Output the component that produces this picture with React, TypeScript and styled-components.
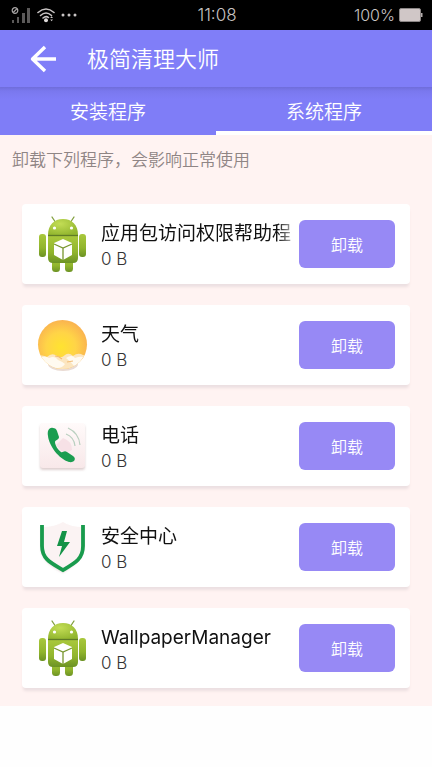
import React, { useState } from "react";
import styled, { createGlobalStyle } from "styled-components";

const GlobalStyle = createGlobalStyle`
  * { box-sizing: border-box; }
  body {
    margin: 0;
    background: #fefefe;
    font-family: Inter, "Noto Sans CJK SC", sans-serif;
    font-weight: 350;
  }
  button { font: inherit; border: 0; padding: 0; cursor: pointer; }
`;

const StatusBar = styled.div`
  display: grid;
  grid-template-columns: 1fr auto 1fr;
  align-items: center;
  height: 30px;
  padding: 0 9px 0 11px;
  background: #000;
  color: #c8c4c4;
  font-size: 16px;
  font-weight: 300;
  line-height: 20px;
`;

const Clock = styled.span`
  font-size: 17px;
`;

const StatusGroup = styled.div<{ $end?: boolean }>`
  display: flex;
  align-items: center;
  justify-content: ${(p) => (p.$end ? "flex-end" : "flex-start")};
  gap: ${(p) => (p.$end ? "4px" : "6px")};
`;

const Header = styled.header`
  display: flex;
  align-items: center;
  gap: 30px;
  height: 57px;
  padding-left: 29px;
  background: #807ef8;
  color: #fff;
`;

const BackButton = styled.button`
  display: flex;
  width: 28px;
  height: 28px;
  background: none;
  color: #fff;
`;

const Title = styled.h1`
  margin: 0;
  font-size: 22px;
  line-height: 28px;
  font-weight: 350;
`;

const Tabs = styled.div`
  display: flex;
  height: 48px;
  background: linear-gradient(#6f6dda, #7a78ee 4px, #7f7df7 12px);
`;

const Tab = styled.button<{ $active: boolean }>`
  flex: 1;
  padding-top: 8px;
  background: none;
  border-bottom: 4px solid ${(p) => (p.$active ? "#fff" : "transparent")};
  color: #fff;
  font-size: 19px;
  line-height: 24px;
`;

const Content = styled.main`
  padding: 12px 0 18px;
  background: #fff3f2;
`;

const Notice = styled.p`
  margin: 0 12px;
  color: #8f8585;
  font-size: 17px;
  line-height: 26px;
`;

const AppList = styled.ul`
  display: flex;
  flex-direction: column;
  gap: 21px;
  margin: 31px 22px 0;
  padding: 0;
  list-style: none;
`;

const Card = styled.li`
  display: flex;
  align-items: center;
  height: 80px;
  padding: 0 15px 0 13px;
  border-radius: 4px;
  background: #fff;
  box-shadow: 0 4px 3px -1px #ecdfe1;
`;

const Info = styled.div`
  flex: 1;
  min-width: 0;
  margin: 0 8px 0 12px;
  padding-top: 4px;
`;

const Name = styled.div`
  overflow: hidden;
  white-space: nowrap;
  color: #111;
  font-size: 19px;
  font-weight: 400;
  line-height: 26px;
  mask-image: linear-gradient(to left, rgba(0, 0, 0, 0.4), #000 14px);
`;

const Size = styled.div`
  color: #333;
  font-size: 17px;
  line-height: 24px;
`;

const Uninstall = styled.button`
  width: 96px;
  height: 48px;
  border-radius: 6px;
  background: #9789f5;
  color: #fff;
  font-size: 16px;
`;

const Picture = styled.svg`
  flex: none;
  display: block;
`;

const SignalIcon = () => (
  <Picture width="20" height="16" viewBox="0 0 20 16" aria-hidden="true">
    <g fill="#5b5959">
      <rect x="1" y="13" width="2" height="3" />
      <rect x="6" y="10" width="2" height="6" />
      <rect x="11" y="6" width="3" height="10" />
      <rect x="16" y="1" width="3" height="15" />
    </g>
    <g fill="none" stroke="#aaa7a7" strokeWidth="1.2">
      <circle cx="4" cy="3.5" r="2.8" />
      <path d="M2.2 5.5 6 1.6" />
    </g>
  </Picture>
);

const WifiIcon = () => (
  <Picture width="18" height="16" viewBox="0 0 18 16" aria-hidden="true">
    <g fill="none" stroke="#c8c4c4" strokeWidth="1.6" strokeLinecap="round">
      <path d="M1 5.5Q9-1.5 17 5.5" />
      <path d="M3.5 8.5Q9 3.5 14.5 8.5" />
      <path d="M6 11Q9 8.5 11.5 10.5" />
    </g>
    <circle cx="9" cy="13.3" r="2" fill="#dedada" />
    <path d="m13.2 11 1.4-1.8L16 11zM13.2 12.5H16l-1.4 1.8z" fill="#c8c4c4" />
  </Picture>
);

const MoreIcon = () => (
  <Picture width="16" height="4" viewBox="0 0 16 4" fill="#c8c4c4" aria-hidden="true">
    <circle cx="2" cy="2" r="1.5" />
    <circle cx="8" cy="2" r="1.5" />
    <circle cx="14" cy="2" r="1.5" />
  </Picture>
);

const BatteryIcon = () => (
  <Picture width="24" height="14" viewBox="0 0 24 14" aria-hidden="true">
    <rect x=".5" y=".5" width="21" height="13" rx="1.5" fill="#d0c7c7" stroke="#8b8686" />
    <rect x="22" y="5" width="1.5" height="4" fill="#b4adad" />
  </Picture>
);

const BackIcon = () => (
  <Picture width="28" height="28" viewBox="0 0 28 28" fill="none" stroke="#fff" strokeWidth="3.4" strokeLinejoin="round" aria-hidden="true">
    <path d="M27 14H4M16 2 3.5 14 16 26" />
  </Picture>
);

const RobotIcon = ({ id }: { id: string }) => (
  <Picture width="54" height="60" viewBox="0 0 54 60" aria-hidden="true">
    <defs>
      <linearGradient id={id + "-body"} x2="0" y2="1">
        <stop stopColor="#a9c83c" />
        <stop offset=".6" stopColor="#91b52d" />
        <stop offset="1" stopColor="#6c9224" />
      </linearGradient>
      <radialGradient id={id + "-head"} cx=".4" cy=".3" r=".75">
        <stop stopColor="#c3dd55" />
        <stop offset="1" stopColor="#91b52e" />
      </radialGradient>
    </defs>
    <path d="m17 3 4 6M39 3l-4 6" stroke="#819f3d" strokeWidth="1.3" strokeLinecap="round" />
    <g fill={`url(#${id}-body)`}>
      <rect x="17" y="42" width="8" height="16" rx="3.5" />
      <rect x="30" y="42" width="8" height="16" rx="3.5" />
      <rect x="4" y="20" width="7" height="23" rx="3" />
      <rect x="44" y="20" width="7" height="23" rx="3" />
      <path d="M13 22h30v22q0 5-5 5H18q-5 0-5-5z" />
    </g>
    <path d="M13 21C13 11 19 5 28 5s15 6 15 16z" fill={`url(#${id}-head)`} />
    <path d="M13 21.5h30" stroke="#5f7c26" strokeWidth="1.3" />
    <circle cx="19.5" cy="14" r="1.6" fill="#fff" />
    <circle cx="36.5" cy="14" r="1.6" fill="#fff" />
    <path d="m28 25 9 4v12l-9 5-9-5V29z" fill="#fff" />
    <path d="m19 30 9 4 9-4M28 34v12" fill="none" stroke="#78962f" strokeWidth="1.3" />
  </Picture>
);

const SunIcon = () => (
  <Picture width="54" height="60" viewBox="0 0 54 60" aria-hidden="true">
    <defs>
      <radialGradient id="sun" cx=".47" cy=".55" r=".6">
        <stop stopColor="#ffe330" />
        <stop offset=".5" stopColor="#ffd447" />
        <stop offset="1" stopColor="#f9ad51" />
      </radialGradient>
      <clipPath id="sun-disc"><circle cx="27.5" cy="29.5" r="24.5" /></clipPath>
      <filter id="sun-soft" x="-20%" y="-20%" width="140%" height="140%"><feGaussianBlur stdDeviation=".7" /></filter>
    </defs>
    <ellipse cx="28" cy="49" rx="15" ry="7" fill="#eadbd3" filter="url(#sun-soft)" />
    <circle cx="27.5" cy="29.5" r="24.5" fill="url(#sun)" />
    <g clipPath="url(#sun-disc)">
      <g filter="url(#sun-soft)">
        <path d="M0 41q6-2 12 1 5-5 10-1 4 3 8-1 4-3 8 1 5-4 10-1l6 2v16H0z" fill="#fce6c0" />
        <path d="M5 43q5-3 9 0 6-3 9 2 5 2 7 4-4 6-13 3-7-2-12-9M31 43q6-4 9 0 5-2 8-1-4 9-9 9-4-5-8-8z" fill="#fffaf0" />
        <path d="M20 41q4 0 7 3M32 47l6-1" fill="none" stroke="#f3bd78" strokeWidth="1.2" />
      </g>
    </g>
  </Picture>
);

const PhoneIcon = () => (
  <Picture width="54" height="60" viewBox="0 0 54 60" aria-hidden="true">
    <defs>
      <linearGradient id="phone-tile" x2="0" y2="1">
        <stop stopColor="#fffafa" />
        <stop offset="1" stopColor="#f8e8e9" />
      </linearGradient>
      <filter id="phone-soft" x="-20%" y="-20%" width="140%" height="140%"><feGaussianBlur stdDeviation="1" /></filter>
    </defs>
    <rect x="5" y="9" width="45" height="45" rx="3" fill="#dfd0d0" filter="url(#phone-soft)" />
    <rect x="5" y="7" width="45" height="45" rx="3" fill="url(#phone-tile)" />
    <path d="M28 22q9 3 9 12l-8 4-8-9z" fill="#f7e1e6" />
    <path d="M31 18q8 3 9 12M33 12q11 5 12 17" fill="none" stroke="#b9cfbf" strokeWidth="1.2" />
    <path
      d="M18 12c-4-1-6 3-5 8 1 10 11 23 21 26 5 1 8-3 4-6l-6-4c-3-2-4 1-6 0-3-2-6-7-6-10 0-2 4-2 4-5l-2-6q-1-3-4-3z"
      fill="#1b9d50"
    />
  </Picture>
);

const ShieldIcon = () => (
  <Picture width="54" height="60" viewBox="0 0 54 60" aria-hidden="true">
    <defs>
      <filter id="shield-soft" x="-20%" y="-20%" width="140%" height="140%"><feGaussianBlur stdDeviation="1" /></filter>
    </defs>
    <path d="M6 12q15 0 22-5 7 5 21 5v20q-2 12-21 24Q7 46 6 33z" fill="#ecdfe0" filter="url(#shield-soft)" />
    <path d="M7 10q13 0 21-5 7 5 20 5v22Q46 43 28 53 9 43 7 32z" fill="#fbf3f3" />
    <path d="M7 8v21c0 13 9 17 21 24 12-7 20-11 20-24V8" fill="none" stroke="#199b4d" strokeWidth="3.8" />
    <path d="m27 14-5 15h5l-3 11 11-15h-6l3-11z" fill="#149347" />
  </Picture>
);

const apps = [
  { name: "应用包访问权限帮助程", icon: <RobotIcon id="helper" /> },
  { name: "天气", icon: <SunIcon /> },
  { name: "电话", icon: <PhoneIcon /> },
  { name: "安全中心", icon: <ShieldIcon /> },
  { name: "WallpaperManager", icon: <RobotIcon id="wallpaper" /> },
];

export default function App() {
  const [active, setActive] = useState(1);
  return (
    <>
      <GlobalStyle />
      <StatusBar>
        <StatusGroup>
          <SignalIcon />
          <WifiIcon />
          <MoreIcon />
        </StatusGroup>
        <Clock>11:08</Clock>
        <StatusGroup $end>
          <span>100%</span>
          <BatteryIcon />
        </StatusGroup>
      </StatusBar>
      <Header>
        <BackButton aria-label="返回">
          <BackIcon />
        </BackButton>
        <Title>极简清理大师</Title>
      </Header>
      <Tabs role="tablist">
        {["安装程序", "系统程序"].map((label, i) => (
          <Tab key={label} role="tab" aria-selected={active === i} $active={active === i} onClick={() => setActive(i)}>
            {label}
          </Tab>
        ))}
      </Tabs>
      <Content>
        <Notice>卸载下列程序，会影响正常使用</Notice>
        <AppList>
          {apps.map((app) => (
            <Card key={app.name}>
              {app.icon}
              <Info>
                <Name>{app.name}</Name>
                <Size>0 B</Size>
              </Info>
              <Uninstall>卸载</Uninstall>
            </Card>
          ))}
        </AppList>
      </Content>
    </>
  );
}
